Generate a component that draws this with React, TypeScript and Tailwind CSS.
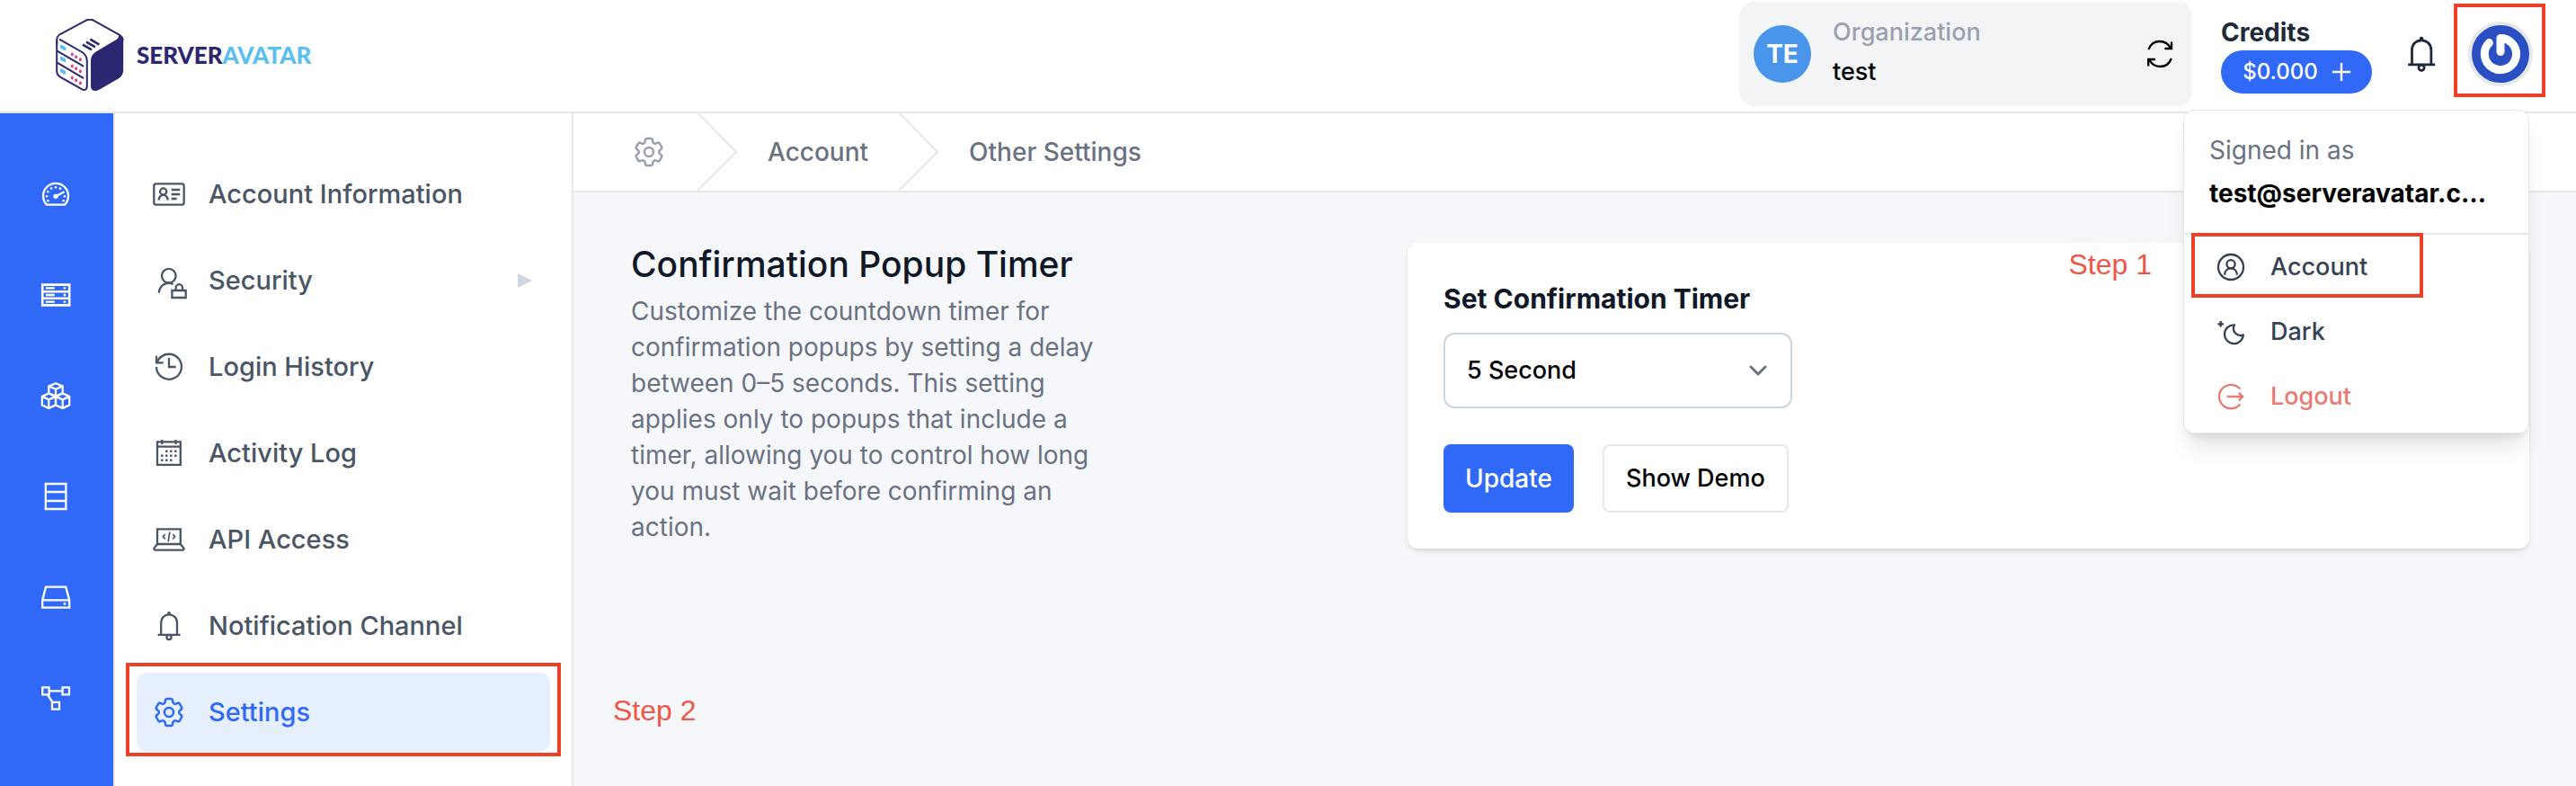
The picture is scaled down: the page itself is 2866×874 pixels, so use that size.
// Account settings screen: header, icon rail, settings navigation and the confirmation timer form
import type { ReactNode } from "react";
import { HiOutlineCog6Tooth } from "react-icons/hi2";

interface IconProps {
  className?: string;
  viewBox?: string;
  children?: ReactNode;
}

function Icon({ className = "size-10", viewBox = "0 0 40 40", children }: IconProps) {
  return (
    <svg
      className={`shrink-0 ${className}`}
      viewBox={viewBox}
      fill="none"
      stroke="currentColor"
      strokeWidth="2.3"
      aria-hidden="true"
    >
      {children}
    </svg>
  );
}

const GaugeIcon = () => (
  <Icon>
    <path d="M10 31.7A14 14 0 1 1 30 31.7Z" strokeLinejoin="round" />
    <path d="M20 22.3L28.7 17.7" strokeLinecap="round" />
    <g fill="currentColor" stroke="none">
      <circle cx="20" cy="22.3" r="2.6" />
      <circle cx="10" cy="22.3" r="1.3" />
      <circle cx="11.3" cy="17.3" r="1.3" />
      <circle cx="15" cy="13.5" r="1.3" />
      <circle cx="20" cy="12.3" r="1.3" />
      <circle cx="25" cy="13.6" r="1.3" />
      <circle cx="30" cy="22.3" r="1.3" />
      <circle cx="28.7" cy="27.3" r="1.3" />
      <circle cx="11.3" cy="27.3" r="1.3" />
    </g>
  </Icon>
);

const ServersIcon = () => (
  <Icon>
    <path d="M5.2 8.6H35.2V31.4H5.2ZM5.2 16.2H35.2M5.2 23.8H35.2" strokeWidth="2.6" />
    <path d="M8.8 12.4H18.8M8.8 20H18.8M8.8 27.6H18.8" strokeWidth="2.4" />
    <path d="M28.7 12.4H31.2M28.7 20H31.2M28.7 27.6H31.2" strokeWidth="2.4" />
  </Icon>
);

const CubesIcon = () => (
  <Icon>
    <g strokeLinejoin="round">
      <path d="M20 6.2L27.7 9.4V17.4L20 20.7L12.3 17.4V9.4ZM12.3 9.4L20 12.7L27.7 9.4M20 12.7V20.7" />
      <path d="M12.3 17.4L20 20.9V30.4L12.3 34L4.8 30.4V20.9ZM4.8 20.9L12.3 24.4L20 20.9M12.3 24.4V34" />
      <path d="M27.7 17.4L35.2 20.9V30.4L27.7 34L20 30.4V20.9ZM20 20.9L27.7 24.4L35.2 20.9M27.7 24.4V34" />
    </g>
  </Icon>
);

const RackIcon = () => (
  <Icon>
    <path d="M8.8 6H31.4V34H8.8ZM8.8 15H31.4M8.8 25H31.4" />
  </Icon>
);

const DriveIcon = () => (
  <Icon>
    <path d="M5.2 23.4H35.2V31.6H5.2ZM5.2 23.4L9 8.6H31.2L35.2 23.4" />
    <circle cx="30" cy="27.4" r="1.4" fill="currentColor" stroke="none" />
  </Icon>
);

const NodesIcon = () => (
  <Icon>
    <path d="M5.2 8.4H12.6V16.4H5.2ZM27.6 8.4H35V16.4H27.6ZM16 24.8H24V32.6H16ZM12.6 12.4H27.6M10.8 16.4L16.6 25" />
  </Icon>
);

const IdCardIcon = () => (
  <Icon>
    <rect x="3.3" y="8.3" width="33.4" height="23.4" rx="2.4" />
    <circle cx="13.7" cy="17" r="3.6" />
    <path d="M8.6 26.5C9 23 11 20.8 13.7 20.8S18.4 23 18.8 26.5M22.7 15H32.3M22.7 20H32.3M22.7 25H28.7" />
  </Icon>
);

const UserLockIcon = () => (
  <Icon className="size-10 overflow-visible">
    <circle cx="19.8" cy="14.7" r="7.8" />
    <path d="M8.8 33.8C9 27.5 13.5 22.8 19.4 22.8C21.3 22.8 23 23.2 24.6 24" />
    <path d="M23.4 31H38.7V39H23.4ZM27.6 31V28A3.6 3.8 0 0 1 35 28V31" />
  </Icon>
);

const HistoryIcon = () => (
  <Icon>
    <path d="M6 20A14 14 0 1 0 8.2 12.2L6.6 15M6 7.7V15.3H13.8M20 10V20H27.7" />
  </Icon>
);

const CalendarIcon = () => (
  <Icon>
    <path d="M7 7.4H32.8V32.8H7ZM7 12.6H32.8M12.3 5V10M27.5 5V10" />
    <path
      d="M16.1 17.7H18.5M21.1 17.7H23.5M26.1 17.7H28.5M11.1 22.7H13.5M16.1 22.7H18.5M21.1 22.7H23.5M26.1 22.7H28.5M11.1 27.7H13.5M16.1 27.7H18.5M21.1 27.7H23.5"
      strokeWidth="2.4"
    />
  </Icon>
);

const LaptopIcon = () => (
  <Icon>
    <path d="M7 25V8.3H32.8V25" />
    <path
      d="M7 25H32.8L36.4 29.4C37 30.8 36.4 31.6 35.2 31.6H4.8C3.6 31.6 3 30.8 3.6 29.4Z"
      strokeLinejoin="round"
    />
    <path d="M15.8 14L13.4 16.7L15.8 19.4M24.2 14L26.6 16.7L24.2 19.4M20.9 11.5L19.1 22.4" strokeWidth="1.7" />
  </Icon>
);

const BellIcon = ({ viewBox }: { viewBox?: string }) => (
  <Icon viewBox={viewBox}>
    <path d="M7.6 29.8H32.6M11.2 29.8V16.4C11.2 11 15 7.3 20 7.3S29 11 29 16.4V29.8" />
    <circle cx="20" cy="5.8" r="1.9" fill="currentColor" stroke="none" />
    <circle cx="20" cy="32.6" r="2.6" />
  </Icon>
);

const RefreshIcon = () => (
  <Icon>
    <path d="M7.4 15C9.4 9.6 14.2 6 20 6C25 6 29.4 8.8 31.8 13.2M33 6.4V14H25.4" />
    <path d="M32.8 25C30.8 30.4 26 34 20.2 34C15.2 34 10.8 31.2 8.4 26.8M7.2 33.6V26H14.8" />
  </Icon>
);

const UserCircleIcon = () => (
  <Icon>
    <circle cx="20" cy="20" r="14" />
    <circle cx="20" cy="16.8" r="4.6" />
    <path d="M13 28.6C13.2 24.4 16 21.4 20 21.4S26.8 24.4 27 28.6" />
  </Icon>
);

const MoonIcon = () => (
  <Icon>
    <path d="M24 12.3A10.4 10.4 0 1 0 33.8 23.4C26.5 26.2 20.4 18.6 24 12.3Z" strokeLinejoin="round" />
    <path d="M8.7 8V14.6M5.4 11.3H12" />
  </Icon>
);

const LogoutIcon = () => (
  <Icon>
    <path d="M30.4 11.6A13.2 13.2 0 1 0 30.4 28.4M15.6 20H33M28.8 15.6L33.2 20L28.8 24.4" />
  </Icon>
);

const CogIcon = () => <HiOutlineCog6Tooth className="size-10 shrink-0" strokeWidth={1.5} />;

const LogoMark = () => (
  <svg className="h-20 w-[76px] shrink-0" viewBox="0 0 76 80" fill="none" aria-hidden="true">
    <path
      d="M1.2 24V58C1.2 61 2.4 63 5 64.6L29 78.2C32 79.8 34.8 78.6 34.8 75V47C34.8 42.6 33 39.4 29.4 37L4 22.6"
      stroke="#2b2770"
      strokeWidth="2"
    />
    <path
      d="M1.2 28V24C1.2 20.6 2.6 18.4 5 17L33.4 1.8C36.4 .4 39.6 .4 42.4 1.8L70.6 17.6C73.4 19.2 74.6 21 74.8 24"
      stroke="#2b2770"
      strokeWidth="2"
    />
    <path
      d="M72.6 19C74.6 20.4 75.2 22.4 75.2 25V57C75.2 61 73.4 64 70 66.2L48.4 78.8C43.4 81.4 39 79.8 39 74.8V47.4C39 42.4 40.8 39 44.8 36.4L66.6 23.6C69.2 22 70 20.6 70.2 18Z"
      fill="#2b2770"
    />
    <path d="M2 35.8L30.4 52.4M2 48.8L30.4 65.6" stroke="#2b2770" strokeWidth="2" strokeLinecap="round" />
    <path d="M38.4 22.6L48.4 28.6M34 25.6L44 31.4M30 28.6L40 34.4" stroke="#2b2770" strokeWidth="2.6" />
    <path d="M5.6 29L10.6 31.6V35L5.6 32.4ZM5.6 42L10.6 44.6V48L5.6 45.4ZM5.6 55.6L10.6 58.2V61.6L5.6 59Z" fill="#5bc0f0" stroke="#5bc0f0" />
    <g fill="#dd3e94">
      <ellipse cx="18.3" cy="39.4" rx="1.5" ry="2" />
      <ellipse cx="22.7" cy="42.2" rx="1.5" ry="2" />
      <ellipse cx="27.4" cy="45.2" rx="1.5" ry="2" />
      <ellipse cx="18.3" cy="52.4" rx="1.5" ry="2" />
      <ellipse cx="22.7" cy="55.2" rx="1.5" ry="2" />
      <ellipse cx="27.4" cy="58.2" rx="1.5" ry="2" />
      <ellipse cx="18.3" cy="65.4" rx="1.5" ry="2" />
      <ellipse cx="22.7" cy="68.2" rx="1.5" ry="2" />
      <ellipse cx="27.4" cy="71.4" rx="1.5" ry="2" />
    </g>
  </svg>
);

const railLinks = [
  { label: "Dashboard", icon: <GaugeIcon /> },
  { label: "Servers", icon: <ServersIcon /> },
  { label: "Applications", icon: <CubesIcon /> },
  { label: "Databases", icon: <RackIcon /> },
  { label: "Storage", icon: <DriveIcon /> },
  { label: "Integrations", icon: <NodesIcon /> },
];

const navLinks = [
  { label: "Account Information", icon: <IdCardIcon /> },
  { label: "Security", icon: <UserLockIcon />, expandable: true },
  { label: "Login History", icon: <HistoryIcon /> },
  { label: "Activity Log", icon: <CalendarIcon /> },
  { label: "API Access", icon: <LaptopIcon /> },
  { label: "Notification Channel", icon: <BellIcon /> },
  { label: "Settings", icon: <CogIcon />, active: true },
];

function Highlight({ className }: { className: string }) {
  return <span className={`pointer-events-none absolute border-4 border-[#ee4027] ${className}`} />;
}

function AccountMenu() {
  return (
    <div className="absolute top-[98px] right-1 z-20 w-[385px] rounded-xl border border-gray-200 bg-white pb-1 shadow-xl">
      <div className="flex flex-col border-b-2 border-gray-200 px-7 pt-6 pb-5">
        <span className="text-[28px] leading-10 text-gray-500">Signed in as</span>
        <span className="mt-1 text-[28px] leading-12 font-bold text-black">test@serveravatar.c…</span>
      </div>
      <div className="relative flex flex-col text-[27px] font-medium text-gray-700">
        <a href="#account" className="flex h-[72px] items-center gap-6 px-8">
          <UserCircleIcon />
          Account
        </a>
        <button type="button" className="flex h-[72px] items-center gap-6 px-8">
          <MoonIcon />
          Dark
        </button>
        <button type="button" className="flex h-[72px] items-center gap-6 px-8 text-[#e97a74]">
          <LogoutIcon />
          Logout
        </button>
        <Highlight className="-top-0.5 left-2 h-[72px] w-[258px]" />
      </div>
    </div>
  );
}

function Header() {
  return (
    <header className="flex h-[126px] items-start justify-between border-b-2 border-gray-200 bg-white pr-12 pl-[62px]">
      <a href="#home" className="flex h-[122px] items-center gap-3.5">
        <LogoMark />
        <span className="font-[Lato] text-[26px] font-black text-[#2b2770]">
          SERVER<span className="text-[#5bc0f0]">AVATAR</span>
        </span>
      </a>

      <div className="flex items-center gap-8 pt-[2px]">
        <div className="flex h-[116px] w-[504px] items-center gap-6 rounded-2xl bg-gray-100 px-4">
          <span className="flex size-16 items-center justify-center rounded-full bg-[#4a95ec] text-[28px] font-bold text-white">
            TE
          </span>
          <div className="flex grow flex-col text-[27px] font-medium">
            <span className="leading-10 text-gray-400">Organization</span>
            <span className="leading-12 text-black">test</span>
          </div>
          <button type="button" aria-label="Switch organization">
            <RefreshIcon />
          </button>
        </div>

        <div className="flex w-[171px] flex-col items-start">
          <span className="text-[28px] leading-10 font-bold text-gray-800">Credits</span>
          <button
            type="button"
            className="flex h-12 w-[168px] items-center justify-center gap-4 rounded-full bg-[#3069f8] text-[24px] font-medium text-white"
          >
            $0.000
            <svg className="size-5" viewBox="0 0 20 20" stroke="currentColor" strokeWidth="2.4" aria-hidden="true">
              <path d="M10 0V20M0 10H20" />
            </svg>
          </button>
        </div>

        <button type="button" aria-label="Notifications" className="text-gray-800">
          <BellIcon viewBox="3.3 3.3 33.3 33.3" />
        </button>

        <div className="relative">
          <button
            type="button"
            aria-label="Account menu"
            className="block size-[72px] rounded-full border-4 border-gray-200 bg-[#2a4fc2]"
          >
            <svg viewBox="4 4 64 64" fill="none" stroke="white" strokeWidth="9" aria-hidden="true">
              <path
                d="M23.4 23.6A17.6 17.6 0 1 0 36 18.4V33.6"
                strokeLinecap="round"
                strokeLinejoin="round"
              />
            </svg>
          </button>
          <Highlight className="-top-5 -left-4 h-[104px] w-[102px]" />
          <AccountMenu />
        </div>
      </div>
    </header>
  );
}

function SettingsNav() {
  return (
    <nav className="flex w-[510px] shrink-0 flex-col gap-2 border-r-2 border-gray-200 bg-white px-6 pt-[46px]">
      {navLinks.map((link) => (
        <a
          key={link.label}
          href="#settings"
          className={`relative flex h-[88px] items-center gap-6 rounded-xl px-4 text-[29px] font-medium ${
            link.active ? "bg-[#e6effe] text-[#3069f8]" : "text-gray-600"
          }`}
        >
          {link.icon}
          <span className="grow">{link.label}</span>
          {link.expandable && (
            <svg className="mr-1 h-4 w-4 text-gray-300" viewBox="0 0 16 16" fill="currentColor" aria-hidden="true">
              <path d="M0 0L16 8L0 16Z" />
            </svg>
          )}
          {link.active && <Highlight className="-inset-x-3 -top-[11px] -bottom-[5px]" />}
        </a>
      ))}
    </nav>
  );
}

function Chevron() {
  return (
    <svg className="h-[86px] w-[46px] text-gray-200" viewBox="0 0 46 86" fill="none" stroke="currentColor" strokeWidth="2" aria-hidden="true">
      <path d="M2 0L44 43L1 86" />
    </svg>
  );
}

function Breadcrumb() {
  return (
    <nav
      aria-label="Breadcrumb"
      className="flex h-[88px] items-center gap-[33px] border-b-2 border-gray-200 bg-white pl-16 text-[28px] font-medium text-gray-500"
    >
      <a href="#account" aria-label="Account settings" className="text-gray-400">
        <CogIcon />
      </a>
      <Chevron />
      <a href="#account">Account</a>
      <Chevron />
      <a href="#other">Other Settings</a>
    </nav>
  );
}

function TimerForm() {
  return (
    <form className="relative rounded-xl bg-white p-10 shadow-md">
      <label htmlFor="timer" className="block text-[30px] leading-11 font-bold text-gray-900">
        Set Confirmation Timer
      </label>
      <div className="relative mt-4 w-[388px]">
        <select
          id="timer"
          defaultValue="5"
          className="h-[84px] w-full appearance-none rounded-xl border-2 border-slate-300 bg-white px-6 text-[27px] font-medium text-black"
        >
          <option value="0">0 Second</option>
          <option value="3">3 Second</option>
          <option value="5">5 Second</option>
        </select>
        <svg
          className="pointer-events-none absolute top-9 right-7 h-3 w-5 text-gray-500"
          viewBox="0 0 20 12"
          fill="none"
          stroke="currentColor"
          strokeWidth="3"
          strokeLinecap="round"
          strokeLinejoin="round"
          aria-hidden="true"
        >
          <path d="M2 2L10 10L18 2" />
        </svg>
      </div>
      <div className="mt-10 flex gap-8">
        <button type="button" className="h-[76px] rounded-lg bg-[#3069f8] px-6 text-[28px] font-medium text-white">
          Update
        </button>
        <button
          type="button"
          className="h-[76px] rounded-lg border-2 border-gray-200 bg-white px-6 text-[27px] font-medium text-black"
        >
          Show Demo
        </button>
      </div>
      <span className="absolute top-0.5 right-[420px] font-['Liberation_Sans'] text-[32px] leading-11 text-[#f05545]">
        Step 1
      </span>
    </form>
  );
}

export default function App() {
  return (
    <div className="flex min-h-screen flex-col bg-[#f5f7fb] font-[Inter,sans-serif]">
      <Header />
      <div className="flex grow">
        <nav className="flex w-32 shrink-0 flex-col items-center gap-[72px] border-r-2 border-gray-200 bg-[#3069f8] pt-[70px] pr-0.5 text-white">
          {railLinks.map((link) => (
            <a key={link.label} href="#section" aria-label={link.label}>
              {link.icon}
            </a>
          ))}
        </nav>
        <SettingsNav />
        <main className="relative min-w-0 grow">
          <Breadcrumb />
          <section className="grid grid-cols-[9fr_13fr] items-start pt-14 pr-[52px] pl-16">
            <div className="max-w-[540px]">
              <h1 className="text-[39px] leading-12 font-medium text-gray-900">Confirmation Popup Timer</h1>
              <p className="mt-2 text-[28px] leading-10 text-gray-500">
                Customize the countdown timer for confirmation popups by setting a delay between 0–5 seconds. This
                setting applies only to popups that include a timer, allowing you to control how long you must wait
                before confirming an action.
              </p>
            </div>
            <TimerForm />
          </section>
          <span className="absolute top-[642px] left-11 font-['Liberation_Sans'] text-[32px] leading-11 text-[#f05545]">
            Step 2
          </span>
        </main>
      </div>
    </div>
  );
}
